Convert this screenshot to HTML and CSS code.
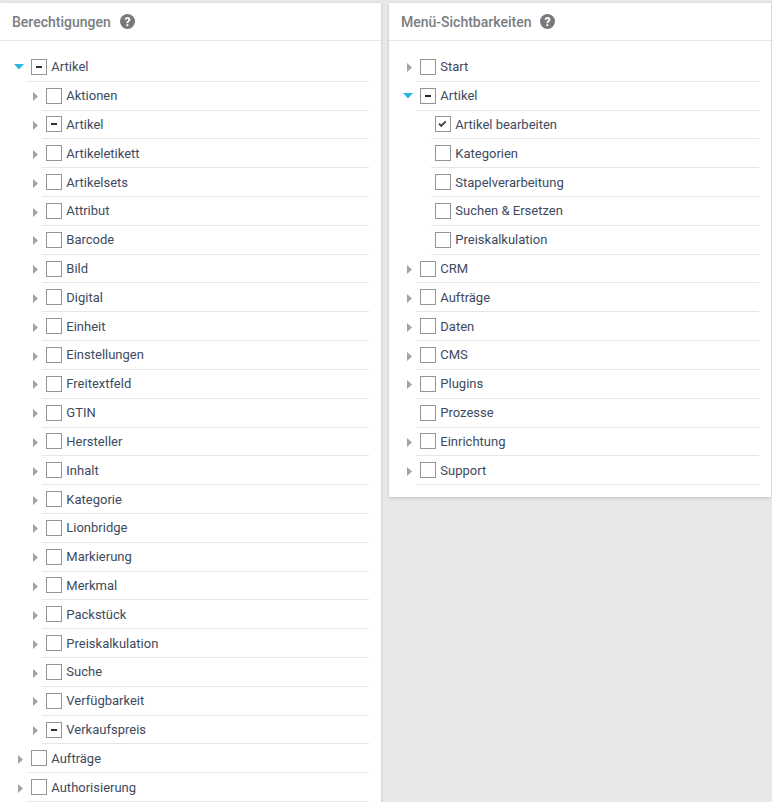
FILE: index.html
```html
<!DOCTYPE html>
<html lang="de">
<head>
<meta charset="utf-8">
<title>Berechtigungen</title>
<link rel="stylesheet" href="styles.css">
</head>
<body>
<svg class="defs" width="0" height="0" aria-hidden="true">
  <symbol id="help" viewBox="0 0 15 15">
    <circle cx="7.5" cy="7.5" r="7.5" fill="#77797c"/>
    <path d="M4.7 5.8c0-1.7 1.2-2.7 2.9-2.7s2.8 1 2.8 2.4c0 1-.5 1.6-1.3 2.2-.7.5-.9.8-.9 1.4v.2H6.4v-.4c0-1 .4-1.5 1.1-2 .6-.5.9-.7.9-1.3 0-.5-.4-.9-.9-.9-.6 0-1 .4-1 1.1H4.7z" fill="#fff"/>
    <rect x="6.4" y="10.2" width="1.9" height="1.9" fill="#fff"/>
  </symbol>
  <symbol id="closed" viewBox="0 0 5 9"><path d="M0 0l5 4.5L0 9z" fill="#a3a3a3"/></symbol>
  <symbol id="open" viewBox="0 0 10 5.5"><path d="M0 0h10L5 5.5z" fill="#2cb5e0"/></symbol>
  <symbol id="check" viewBox="0 0 16 16"><path d="M3.4 8.2l1.2-1.2 1.6 1.6 4-3.9 1.2 1.2-5.2 5.3z" fill="#3a3f4a"/></symbol>
</svg>
<main class="page">
  <section class="panel panel-left">
    <header class="panel-head"><h2>Berechtigungen</h2><svg class="help"><use href="#help"/></svg></header>
    <div class="tree">
      <div class="row"><svg class="arrow-open"><use href="#open"/></svg><div class="cell"><span class="box partial"></span>Artikel</div></div>
      <div class="row sub"><svg class="arrow"><use href="#closed"/></svg><div class="cell"><span class="box"></span>Aktionen</div></div>
      <div class="row sub"><svg class="arrow"><use href="#closed"/></svg><div class="cell"><span class="box partial"></span>Artikel</div></div>
      <div class="row sub"><svg class="arrow"><use href="#closed"/></svg><div class="cell"><span class="box"></span>Artikeletikett</div></div>
      <div class="row sub"><svg class="arrow"><use href="#closed"/></svg><div class="cell"><span class="box"></span>Artikelsets</div></div>
      <div class="row sub"><svg class="arrow"><use href="#closed"/></svg><div class="cell"><span class="box"></span>Attribut</div></div>
      <div class="row sub"><svg class="arrow"><use href="#closed"/></svg><div class="cell"><span class="box"></span>Barcode</div></div>
      <div class="row sub"><svg class="arrow"><use href="#closed"/></svg><div class="cell"><span class="box"></span>Bild</div></div>
      <div class="row sub"><svg class="arrow"><use href="#closed"/></svg><div class="cell"><span class="box"></span>Digital</div></div>
      <div class="row sub"><svg class="arrow"><use href="#closed"/></svg><div class="cell"><span class="box"></span>Einheit</div></div>
      <div class="row sub"><svg class="arrow"><use href="#closed"/></svg><div class="cell"><span class="box"></span>Einstellungen</div></div>
      <div class="row sub"><svg class="arrow"><use href="#closed"/></svg><div class="cell"><span class="box"></span>Freitextfeld</div></div>
      <div class="row sub"><svg class="arrow"><use href="#closed"/></svg><div class="cell"><span class="box"></span>GTIN</div></div>
      <div class="row sub"><svg class="arrow"><use href="#closed"/></svg><div class="cell"><span class="box"></span>Hersteller</div></div>
      <div class="row sub"><svg class="arrow"><use href="#closed"/></svg><div class="cell"><span class="box"></span>Inhalt</div></div>
      <div class="row sub"><svg class="arrow"><use href="#closed"/></svg><div class="cell"><span class="box"></span>Kategorie</div></div>
      <div class="row sub"><svg class="arrow"><use href="#closed"/></svg><div class="cell"><span class="box"></span>Lionbridge</div></div>
      <div class="row sub"><svg class="arrow"><use href="#closed"/></svg><div class="cell"><span class="box"></span>Markierung</div></div>
      <div class="row sub"><svg class="arrow"><use href="#closed"/></svg><div class="cell"><span class="box"></span>Merkmal</div></div>
      <div class="row sub"><svg class="arrow"><use href="#closed"/></svg><div class="cell"><span class="box"></span>Packstück</div></div>
      <div class="row sub"><svg class="arrow"><use href="#closed"/></svg><div class="cell"><span class="box"></span>Preiskalkulation</div></div>
      <div class="row sub"><svg class="arrow"><use href="#closed"/></svg><div class="cell"><span class="box"></span>Suche</div></div>
      <div class="row sub"><svg class="arrow"><use href="#closed"/></svg><div class="cell"><span class="box"></span>Verfügbarkeit</div></div>
      <div class="row sub"><svg class="arrow"><use href="#closed"/></svg><div class="cell"><span class="box partial"></span>Verkaufspreis</div></div>
      <div class="row"><svg class="arrow"><use href="#closed"/></svg><div class="cell"><span class="box"></span>Aufträge</div></div>
      <div class="row"><svg class="arrow"><use href="#closed"/></svg><div class="cell"><span class="box"></span>Authorisierung</div></div>
    </div>
  </section>
  <section class="panel panel-right">
    <header class="panel-head"><h2>Menü-Sichtbarkeiten</h2><svg class="help"><use href="#help"/></svg></header>
    <div class="tree">
      <div class="row"><svg class="arrow"><use href="#closed"/></svg><div class="cell"><span class="box"></span>Start</div></div>
      <div class="row"><svg class="arrow-open"><use href="#open"/></svg><div class="cell"><span class="box partial"></span>Artikel</div></div>
      <div class="row sub leaf"><div class="cell"><span class="box checked"><svg class="tick"><use href="#check"/></svg></span>Artikel bearbeiten</div></div>
      <div class="row sub leaf"><div class="cell"><span class="box"></span>Kategorien</div></div>
      <div class="row sub leaf"><div class="cell"><span class="box"></span>Stapelverarbeitung</div></div>
      <div class="row sub leaf"><div class="cell"><span class="box"></span>Suchen &amp; Ersetzen</div></div>
      <div class="row sub leaf"><div class="cell"><span class="box"></span>Preiskalkulation</div></div>
      <div class="row"><svg class="arrow"><use href="#closed"/></svg><div class="cell"><span class="box"></span>CRM</div></div>
      <div class="row"><svg class="arrow"><use href="#closed"/></svg><div class="cell"><span class="box"></span>Aufträge</div></div>
      <div class="row"><svg class="arrow"><use href="#closed"/></svg><div class="cell"><span class="box"></span>Daten</div></div>
      <div class="row"><svg class="arrow"><use href="#closed"/></svg><div class="cell"><span class="box"></span>CMS</div></div>
      <div class="row"><svg class="arrow"><use href="#closed"/></svg><div class="cell"><span class="box"></span>Plugins</div></div>
      <div class="row leaf"><div class="cell"><span class="box"></span>Prozesse</div></div>
      <div class="row"><svg class="arrow"><use href="#closed"/></svg><div class="cell"><span class="box"></span>Einrichtung</div></div>
      <div class="row"><svg class="arrow"><use href="#closed"/></svg><div class="cell"><span class="box"></span>Support</div></div>
    </div>
  </section>
</main>
</body>
</html>
```
FILE: styles.css
```css
* { box-sizing: border-box; }
html, body { margin: 0; height: 100%; overflow: hidden; }
body {
  background: #e7e8ea;
  font-family: Roboto, "Liberation Sans", sans-serif;
  font-size: 13px;
  color: #3e4a5e;
}
.defs { position: absolute; }
.page {
  display: grid;
  grid-template-columns: 381px 382px;
  column-gap: 8px;
  align-items: start;
  padding-top: 3px;
}
.panel {
  background: #fff;
  box-shadow: 0 1px 3px rgba(0, 0, 0, .18);
}
.panel-left { height: 900px; }
.panel-right { padding-bottom: 12px; }
.panel-head {
  display: flex;
  align-items: center;
  gap: 9px;
  height: 38px;
  padding-left: 12px;
  border-bottom: 1px solid #e6e6e6;
}
.panel-head h2 {
  margin: 0;
  font-size: 14px;
  font-weight: 500;
  color: #7a7d80;
}
.help { width: 15px; height: 15px; }
.tree { padding: 11.95px 12px 0 0; }
.row {
  display: flex;
  align-items: center;
  height: 28.8125px;
  padding-left: 27px;
  position: relative;
}
.row.sub { padding-left: 42px; }
.cell {
  flex: 1;
  display: flex;
  align-items: center;
  gap: 4.3px;
  height: 100%;
  padding-left: 4px;
  border-bottom: 1px solid #e6e6e6;
}
.arrow, .arrow-open { position: absolute; }
.arrow { width: 5px; height: 9px; left: 18px; top: 10.5px; }
.sub > .arrow { left: 33px; }
.arrow-open { width: 10px; height: 5.5px; left: 14px; top: 11.5px; }
.box {
  flex: none;
  display: flex;
  align-items: center;
  justify-content: center;
  width: 16px;
  height: 16px;
  background: #fff;
  border: 1px solid #949494;
  position: relative;
}
.box.partial::before {
  content: "";
  width: 6px;
  height: 2px;
  background: #2a3040;
}
.tick { position: absolute; left: -1px; top: -1px; width: 16px; height: 16px; }
```
